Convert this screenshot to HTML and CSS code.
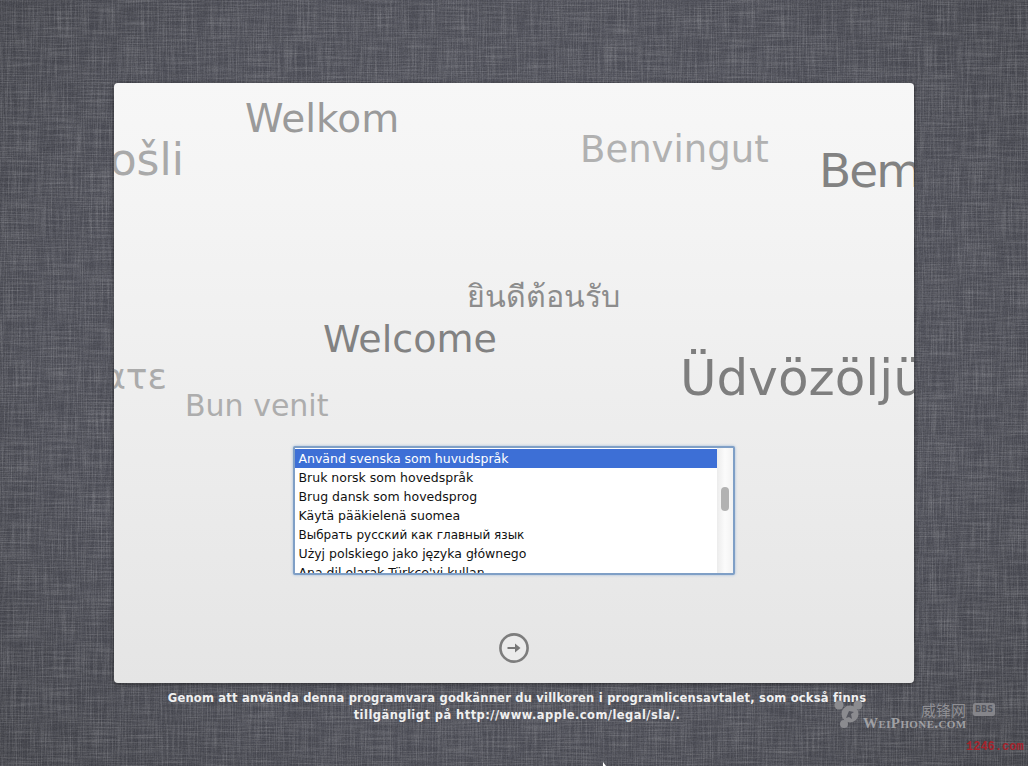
FILE: index.html
```html
<!DOCTYPE html>
<html lang="sv">
<head>
    <meta charset="UTF-8">
    <meta name="viewport" content="width=device-width, initial-scale=1.0">
    <title>Installer</title>
    <link rel="stylesheet" href="styles.css">
</head>
<body>
    <svg class="linen" width="1028" height="766">
        <filter id="threads-x">
            <feTurbulence type="fractalNoise" baseFrequency="0.025 0.8" numOctaves="2" seed="4"/>
            <feColorMatrix values="0 0 0 0 1  0 0 0 0 1  0 0 0 0 1  1.6 0 0 0 -0.62"/>
        </filter>
        <filter id="threads-y">
            <feTurbulence type="fractalNoise" baseFrequency="0.8 0.025" numOctaves="2" seed="9"/>
            <feColorMatrix values="0 0 0 0 1  0 0 0 0 1  0 0 0 0 1  1.6 0 0 0 -0.62"/>
        </filter>
        <filter id="threads-dark">
            <feTurbulence type="fractalNoise" baseFrequency="0.7 0.7" numOctaves="1" seed="2"/>
            <feColorMatrix values="0 0 0 0 0  0 0 0 0 0  0 0 0 0 0  1.6 0 0 0 -0.62"/>
        </filter>
        <rect class="thread" width="1028" height="766" filter="url(#threads-x)"/>
        <rect class="thread" width="1028" height="766" filter="url(#threads-y)"/>
        <rect class="thread" width="1028" height="766" filter="url(#threads-dark)"/>
    </svg>

    <div class="card">
        <div class="words">
            <span class="word word-welkom">Welkom</span>
            <span class="word word-dobro">Dobrodošli</span>
            <span class="word word-benvingut">Benvingut</span>
            <span class="word word-bem">Bem-vindo</span>
            <span class="word word-thai">ยินดีต้อนรับ</span>
            <span class="word word-welcome">Welcome</span>
            <span class="word word-greek">Καλώς ήρθατε</span>
            <span class="word word-bun">Bun venit</span>
            <span class="word word-udv">Üdvözöljük</span>
        </div>

        <div class="list-wrap">
            <ul class="lang-list">
                <li class="selected">Använd svenska som huvudspråk</li>
                <li>Bruk norsk som hovedspråk</li>
                <li>Brug dansk som hovedsprog</li>
                <li>Käytä pääkielenä suomea</li>
                <li class="cyrillic">Выбрать русский как главный язык</li>
                <li>Użyj polskiego jako języka głównego</li>
                <li>Ana dil olarak Türkçe'yi kullan</li>
            </ul>
            <div class="scrollbar"><div class="thumb"></div></div>
        </div>

        <div class="next">
            <svg width="32" height="32" viewBox="0 0 32 32">
                <circle cx="16" cy="16" r="13.6" fill="#ebebeb" stroke="#7d7d7d" stroke-width="2.6"/>
                <path d="M9.5 16H19" fill="none" stroke="#777" stroke-width="2"/>
                <path d="M17 11.5L22.5 16L17 20.5Z" fill="#777"/>
            </svg>
        </div>
    </div>

    <p class="legal">Genom att använda denna programvara godkänner du villkoren i programlicensavtalet, som också finns<br><span class="legal-link">tillgängligt på http://www.apple.com/legal/sla/.</span></p>

    <div class="watermark">
        <svg class="wm-logo" width="32" height="34" viewBox="0 0 32 34">
            <g fill="#8b8b8f">
                <circle cx="5" cy="6" r="4.5"/>
                <circle cx="24" cy="6" r="4.5"/>
                <circle cx="10" cy="25" r="4"/>
                <circle cx="16" cy="15" r="8.5"/>
            </g>
            <path d="M12 19l3-7 5 1-3 2 1 5-3-2z" fill="#55565e"/>
        </svg>
        <span class="wm-cn">威锋网</span>
        <span class="wm-bbs">BBS</span>
        <span class="wm-en">WeiPhone.com</span>
    </div>
    <span class="stamp">1246.com</span>

    <svg class="cursor" width="6" height="4" viewBox="0 0 6 4">
        <path d="M1 0L1 4L4 4Z" fill="#fff"/>
    </svg>
</body>
</html>
```

FILE: styles.css
```css
html, body {
    height: 100%;
}

body {
    margin: 0;
    padding-top: 83px;
    box-sizing: border-box;
    overflow: hidden;
    position: relative;
    font-family: "DejaVu Sans", sans-serif;
    background: radial-gradient(ellipse at 50% 45%, #575862 0%, #4f5059 65%, #44454c 100%);
}

.linen {
    position: absolute;
    left: 0;
    top: 0;
}

.thread {
    opacity: 0.2;
}

.card {
    width: 800px;
    height: 600px;
    margin: 0 auto;
    position: relative;
    overflow: hidden;
    border-radius: 4px;
    background: linear-gradient(180deg, #f7f7f7 0%, #f4f4f4 20%, #e5e5e5 100%);
    box-shadow: 0 1px 4px rgba(0, 0, 0, 0.5);
    display: flex;
    flex-direction: column;
    align-items: center;
}

.words {
    height: 363px;
    align-self: stretch;
    position: relative;
}

.word {
    position: absolute;
    white-space: nowrap;
    line-height: 1;
}

.word-welkom {
    left: 131px;
    top: 16px;
    font-size: 39px;
    color: #9a9a9a;
}

.word-dobro {
    right: 730px;
    top: 55px;
    font-size: 44px;
    color: #a9a9a9;
}

.word-benvingut {
    left: 466px;
    top: 48px;
    font-size: 37px;
    color: #b1b1b1;
}

.word-bem {
    left: 705px;
    top: 64px;
    font-size: 47px;
    letter-spacing: -2px;
    color: #828282;
}

.word-thai {
    left: 353px;
    top: 199px;
    font-size: 30.4px;
    color: #8c8c8c;
}

.word-welcome {
    left: 209px;
    top: 237px;
    font-size: 38px;
    color: #828282;
}

.word-greek {
    right: 747px;
    top: 276px;
    font-size: 36px;
    color: #ababab;
}

.word-bun {
    left: 71px;
    top: 308px;
    font-size: 30px;
    color: #adadad;
}

.word-udv {
    left: 566px;
    top: 270px;
    font-size: 50px;
    color: #7e7e7e;
}

.list-wrap {
    width: 438px;
    height: 125px;
    margin-right: 1px;
    border: 2px solid #7f9fc6;
    border-radius: 2px;
    background: #fff;
    box-shadow: 0 0 3px #9db8d8;
    display: flex;
    overflow: hidden;
}

.lang-list {
    flex: 1;
    margin: 0;
    padding: 1px 0 0;
    list-style: none;
    overflow: hidden;
}

.lang-list li {
    height: 19px;
    line-height: 20px;
    padding-left: 4px;
    font-size: 12.5px;
    color: #111;
    white-space: nowrap;
}

.lang-list .cyrillic {
    font-size: 12px;
}

.lang-list .selected {
    background: #3d6fd6;
    color: #fff;
}

.scrollbar {
    width: 16px;
    padding-top: 39px;
    box-sizing: border-box;
    background: linear-gradient(90deg, #ececec, #fbfbfb 50%, #f2f2f2);
    display: flex;
    justify-content: center;
}

.thumb {
    width: 8px;
    height: 24px;
    border-radius: 4px;
    background: #b2b2b2;
}

.next {
    margin-top: 57px;
    height: 32px;
}

.legal {
    margin: 7px 0 0;
    padding-left: 6px;
    position: relative;
    text-align: center;
    font-size: 11.5px;
    line-height: 17px;
    font-weight: bold;
    letter-spacing: 0.22px;
    color: #f0f0f0;
}

.legal-link {
    letter-spacing: 0.44px;
}

.watermark {
    position: absolute;
    left: 834px;
    top: 699px;
    width: 140px;
    height: 36px;
}

.wm-logo {
    position: absolute;
    left: 0;
    top: 0;
}

.wm-cn {
    position: absolute;
    left: 87px;
    top: 3px;
    font-family: "Noto Sans CJK SC", sans-serif;
    font-size: 15px;
    line-height: 15px;
    color: #8f8f94;
}

.wm-bbs {
    position: absolute;
    left: 139px;
    top: 4px;
    padding: 0 2px;
    font-size: 8px;
    line-height: 13px;
    font-weight: bold;
    color: #55565e;
    background: #85858a;
    border-radius: 2px;
}

.wm-en {
    position: absolute;
    left: 29px;
    top: 19px;
    font-family: "Liberation Serif", serif;
    font-size: 15px;
    line-height: 11px;
    font-weight: bold;
    font-variant: small-caps;
    letter-spacing: 0.4px;
    color: #a0a0a4;
}

.stamp {
    position: absolute;
    left: 966px;
    top: 741px;
    font-family: "Liberation Mono", monospace;
    font-size: 12px;
    line-height: 12px;
    font-weight: bold;
    color: #a5242c;
}

.cursor {
    position: absolute;
    left: 602px;
    bottom: 0;
}
```
